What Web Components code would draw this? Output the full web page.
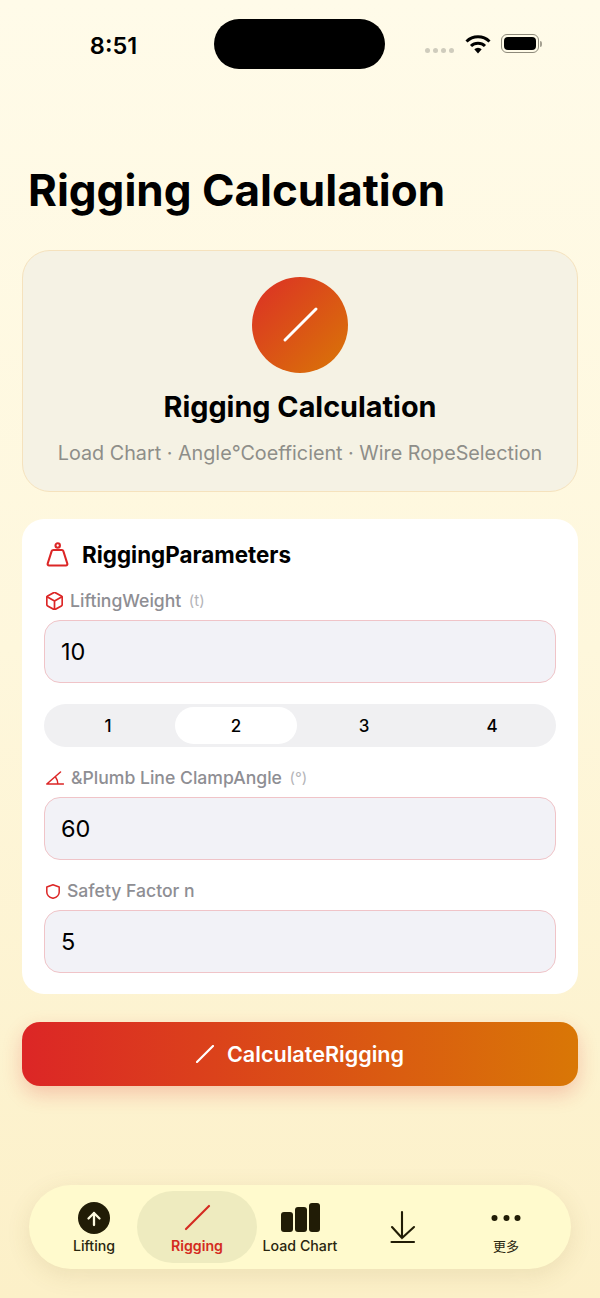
<!DOCTYPE html>
<html lang="en">
<head>
<meta charset="utf-8">
<title>Rigging Calculation</title>
<style>
  html, body { margin: 0; padding: 0; }
  body {
    width: 600px;
    height: 1298px;
    overflow: hidden;
    font-family: Inter, "Noto Sans CJK SC", sans-serif;
    background: linear-gradient(180deg, #fffbe9 0%, #fef7dc 50%, #fcf0c8 100%);
  }
</style>
</head>
<body>
<rig-screen>
  <status-bar slot="status" time="8:51"></status-bar>
  <h-title slot="title">Rigging Calculation</h-title>
  <hero-card slot="hero" heading="Rigging Calculation" sub="Load Chart · Angle°Coefficient · Wire RopeSelection"></hero-card>
  <form-card slot="form" heading="RiggingParameters">
    <svg slot="icon" width="26" height="26" viewBox="0 0 26 26" fill="none" stroke="#dc2626" stroke-width="2.100" stroke-linejoin="round"><circle cx="13.700" cy="3.500" r="2.200"/><path d="M9.500 8h8.400c.7 0 1.200.4 1.400 1l4 12.500c.3 1-.3 2-1.400 2H5.100c-1.100 0-1.700-1-1.400-2l4-12.500c.2-.6.7-1 1.800-1z"/></svg>
    <param-field label="LiftingWeight" unit="(t)" value="10">
      <svg slot="icon" width="17" height="18" viewBox="2.500 1.500 19 21" fill="none" stroke="#dc2626" stroke-width="2" stroke-linejoin="round" stroke-linecap="round"><path d="M21 16V8a2 2 0 0 0-1-1.730l-7-4a2 2 0 0 0-2 0l-7 4A2 2 0 0 0 3 8v8a2 2 0 0 0 1 1.730l7 4a2 2 0 0 0 2 0l7-4A2 2 0 0 0 21 16z"/><path d="M3.300 7 12 12l8.700-5M12 22V12"/></svg>
    </param-field>
    <seg-control options="1,2,3,4" active="2"></seg-control>
    <param-field label="&amp;Plumb Line ClampAngle" unit="(°)" value="60">
      <svg slot="icon" width="18" height="14" viewBox="0 0 18 14" fill="none" stroke="#dc2626" stroke-width="1.500" stroke-linecap="round"><path d="M.8 13H17.500M.8 13 14.500 1M9.500 6c1.500 2 2.300 4.500 2.300 7"/></svg>
    </param-field>
    <param-field label="Safety Factor n" value="5">
      <svg slot="icon" width="14" height="15" viewBox="0 0 14 15" fill="none" stroke="#dc2626" stroke-width="1.500" stroke-linejoin="round"><path d="M7 .8 13.200 3V8C13.200 11.300 10.500 13.400 7 14.300 3.500 13.400.8 11.300.8 8V3z"/></svg>
    </param-field>
  </form-card>
  <cta-button slot="cta">CalculateRigging</cta-button>
  <tab-bar slot="tabs">
    <tab-item label="Lifting">
      <svg width="32" height="32" viewBox="0 0 32 32"><circle cx="16" cy="16" r="16" fill="#211c06"/><path d="M16 23V11M10.500 16.500 16 11l5.500 5.500" fill="none" stroke="#fffbe0" stroke-width="2.300" stroke-linecap="round" stroke-linejoin="round"/></svg>
    </tab-item>
    <tab-item label="Rigging" active>
      <svg width="32" height="32" viewBox="0 0 32 32"><path d="M5 27 28 4" fill="none" stroke="#d42a20" stroke-width="2.200" stroke-linecap="round"/></svg>
    </tab-item>
    <tab-item label="Load Chart">
      <svg width="42" height="32" viewBox="0 0 42 32" fill="#211c06"><rect x="2" y="10" width="12" height="20" rx="3"/><rect x="16" y="5" width="12" height="25" rx="3"/><rect x="30" y="1" width="11" height="29" rx="3"/></svg>
    </tab-item>
    <tab-item>
      <svg width="28" height="34" viewBox="0 0 28 34" fill="none" stroke="#211c06" stroke-width="2.100" stroke-linecap="round"><path d="M13 2v26M3 17l10 11 12-11M2.500 32h22.500"/></svg>
    </tab-item>
    <tab-item label="更多" class="cjk">
      <svg width="32" height="10" viewBox="0 0 32 10" fill="#211c06"><circle cx="4.500" cy="5" r="3"/><circle cx="16.500" cy="5" r="3"/><circle cx="27.500" cy="5" r="3"/></svg>
    </tab-item>
  </tab-bar>
</rig-screen>

<script>
// small helper so each class only writes its css + markup
function mount(el, html) {
  if (!el.shadowRoot) el.attachShadow({ mode: 'open' });
  el.shadowRoot.innerHTML = html;
}

class RigScreen extends HTMLElement {
  connectedCallback() {
    mount(this, `
      <style>
        :host { display: flex; flex-direction: column; height: 1298px; box-sizing: border-box; padding: 0 22px; }
      </style>
      <slot name="status"></slot>
      <slot name="title"></slot>
      <slot name="hero"></slot>
      <slot name="form"></slot>
      <slot name="cta"></slot>
      <slot name="tabs"></slot>
    `);
  }
}

class StatusBar extends HTMLElement {
  connectedCallback() {
    mount(this, `
      <style>
        :host { display: flex; align-items: center; height: 50px; margin: 19px -22px 0; }
        .time { width: 214px; text-align: center; padding: 2px 0 0 13px; box-sizing: border-box; font: 600 23.500px Inter, sans-serif; color: #000; }
        .island { width: 171px; height: 50px; border-radius: 25px; background: #000; }
        .right { display: flex; align-items: center; margin-left: 40px; }
        .dots { display: flex; gap: 3px; margin-top: 13px; }
        .dots i { width: 5px; height: 5px; border-radius: 50%; background: #cfccbd; }
        .wifi { margin-left: 11px; margin-top: -1px; }
        .batt { display: flex; align-items: center; margin-left: 10px; margin-top: -1px; }
        .shell { width: 32px; height: 13px; border: 1px solid #8d897a; border-radius: 6px; padding: 2px; }
        .shell b { display: block; width: 100%; height: 100%; background: #000; border-radius: 4px; }
        .nub { width: 2px; height: 6px; background: #a5a192; border-radius: 0 2px 2px 0; margin-left: 1px; }
      </style>
      <div class="time">${this.getAttribute('time')}</div>
      <div class="island"></div>
      <div class="right">
        <div class="dots"><i></i><i></i><i></i><i></i></div>
        <svg class="wifi" width="26" height="20" viewBox="0 0 26 20" fill="none" stroke="#000" stroke-width="3"><path d="M1.500 7.500a16.500 16.500 0 0 1 23 0M6 12a10 10 0 0 1 14 0"/><path d="M9.300 15.200a5.200 5.200 0 0 1 7.400 0L13 19.500z" fill="#000" stroke="none"/></svg>
        <div class="batt"><div class="shell"><b></b></div><div class="nub"></div></div>
      </div>
    `);
  }
}

class HTitle extends HTMLElement {
  connectedCallback() {
    mount(this, `
      <style>
        :host { display: block; margin: 93px 0 0 6px; height: 56px; font: 700 44px/56px Inter, sans-serif; color: #000; white-space: nowrap; }
      </style>
      <slot></slot>
    `);
  }
}

class HeroCard extends HTMLElement {
  connectedCallback() {
    mount(this, `
      <style>
        :host { display: flex; flex-direction: column; align-items: center; box-sizing: border-box; height: 242px; margin-top: 32px; padding-top: 26px;
          background: #f5f2e4; border: 1.500px solid #f5e2bd; border-radius: 28px; }
        .disc { width: 96px; height: 96px; border-radius: 50%; background: linear-gradient(135deg, #dc2f26, #d97706); display: flex; align-items: center; justify-content: center; }
        h2 { margin: 16px 0 0; font: 700 28.800px/36px Inter, sans-serif; color: #000; }
        p { margin: 14px 0 0; font: 400 19.750px/28px Inter, sans-serif; color: #8e8e89; white-space: nowrap; }
      </style>
      <div class="disc">
        <svg width="40" height="40" viewBox="0 0 40 40"><path d="M5 35 36 4" fill="none" stroke="#fff" stroke-width="3" stroke-linecap="round"/></svg>
      </div>
      <h2>${this.getAttribute('heading')}</h2>
      <p>${this.getAttribute('sub')}</p>
    `);
  }
}

class FormCard extends HTMLElement {
  connectedCallback() {
    mount(this, `
      <style>
        :host { display: block; box-sizing: border-box; height: 475px; margin-top: 27px; padding: 21px 22px 0; background: #fff; border-radius: 22px; }
        .head { display: flex; align-items: center; gap: 12px; height: 30px; font: 700 22.400px/30px Inter, sans-serif; color: #000; }
        .head slot { display: flex; }
      </style>
      <div class="head"><slot name="icon"></slot><span>${this.getAttribute('heading')}</span></div>
      <slot></slot>
    `);
  }
}

class ParamField extends HTMLElement {
  connectedCallback() {
    const unit = this.getAttribute('unit');
    mount(this, `
      <style>
        :host { display: block; margin-top: 19px; }
        .lab { display: flex; align-items: center; gap: 7.500px; height: 24px; padding-left: 1.500px; font: 500 17.600px/24px Inter, sans-serif; color: #8e8e93; white-space: nowrap; }
        .lab slot { display: flex; }
        .unit { font-size: 15px; font-weight: 400; color: #b4b4b8; }
        .box { box-sizing: border-box; height: 63px; margin-top: 7px; padding-left: 16px; display: flex; align-items: center; background: #f2f2f7; border: 1.500px solid #f0c4c8; border-radius: 16px; font: 400 23.500px Inter, sans-serif; color: #000; }
      </style>
      <div class="lab"><slot name="icon"></slot><span>${this.getAttribute('label')}</span>${unit ? `<span class="unit">${unit}</span>` : ''}</div>
      <div class="box">${this.getAttribute('value')}</div>
    `);
  }
}

class SegControl extends HTMLElement {
  connectedCallback() {
    const active = this.getAttribute('active');
    const items = this.getAttribute('options').split(',')
      .map(o => `<div class="opt${o === active ? ' on' : ''}">${o}</div>`).join('');
    mount(this, `
      <style>
        :host { display: grid; grid-template-columns: repeat(4, 1fr); box-sizing: border-box; height: 43px; margin-top: 21px; padding: 3px 0; background: #f0f0f2; border-radius: 22px; }
        .opt { display: flex; align-items: center; justify-content: center; border-radius: 19px; font: 500 17px Inter, sans-serif; color: #000; margin: 0 3px; }
        .on { background: #fff; }
      </style>
      ${items}
    `);
  }
}

class CtaButton extends HTMLElement {
  connectedCallback() {
    mount(this, `
      <style>
        :host { display: flex; align-items: center; justify-content: center; gap: 13px; box-sizing: border-box; height: 64px; margin-top: 28px; border-radius: 18px;
          background: linear-gradient(90deg, #dc2626, #d97706); color: #fff; font: 600 21.600px Inter, sans-serif;
          box-shadow: 0 8px 20px rgba(220, 38, 38, .22); }
      </style>
      <svg width="18" height="18" viewBox="0 0 18 18"><path d="M1 17 17 1" fill="none" stroke="#fff" stroke-width="2.200" stroke-linecap="round"/></svg>
      <slot></slot>
    `);
  }
}

class TabBar extends HTMLElement {
  connectedCallback() {
    mount(this, `
      <style>
        :host { display: flex; align-items: center; box-sizing: border-box; height: 84px; margin: auto 7px 29px; padding: 0 13.500px; border-radius: 42px;
          background: #fffacd; box-shadow: 0 6px 24px rgba(120, 100, 30, .12); }
      </style>
      <slot></slot>
    `);
  }
}

class TabItem extends HTMLElement {
  connectedCallback() {
    const label = this.getAttribute('label');
    mount(this, `
      <style>
        :host { flex: none; width: 103px; box-sizing: border-box; display: flex; flex-direction: column; align-items: center; height: 72px; padding-top: 11px; border-radius: 36px; color: #2a2610; font: 500 14.200px/18px Inter, "Noto Sans CJK SC", sans-serif; }
        :host([active]) { width: 120px; margin: 0 -8.500px; background: #eeebbf; color: #d42a20; font-weight: 600; }
        :host(:not([label])) { justify-content: center; padding-top: 0; }
        :host(.cjk) { font-size: 13px; font-weight: 400; }
        .ic { height: 32px; display: flex; align-items: center; }
        .lbl { margin-top: 3px; }
        :host(:not([label])) .ic { height: auto; }
      </style>
      <div class="ic"><slot></slot></div>
      ${label ? `<div class="lbl">${label}</div>` : ''}
    `);
  }
}

customElements.define('rig-screen', RigScreen);
customElements.define('status-bar', StatusBar);
customElements.define('h-title', HTitle);
customElements.define('hero-card', HeroCard);
customElements.define('form-card', FormCard);
customElements.define('param-field', ParamField);
customElements.define('seg-control', SegControl);
customElements.define('cta-button', CtaButton);
customElements.define('tab-bar', TabBar);
customElements.define('tab-item', TabItem);
</script>
</body>
</html>
